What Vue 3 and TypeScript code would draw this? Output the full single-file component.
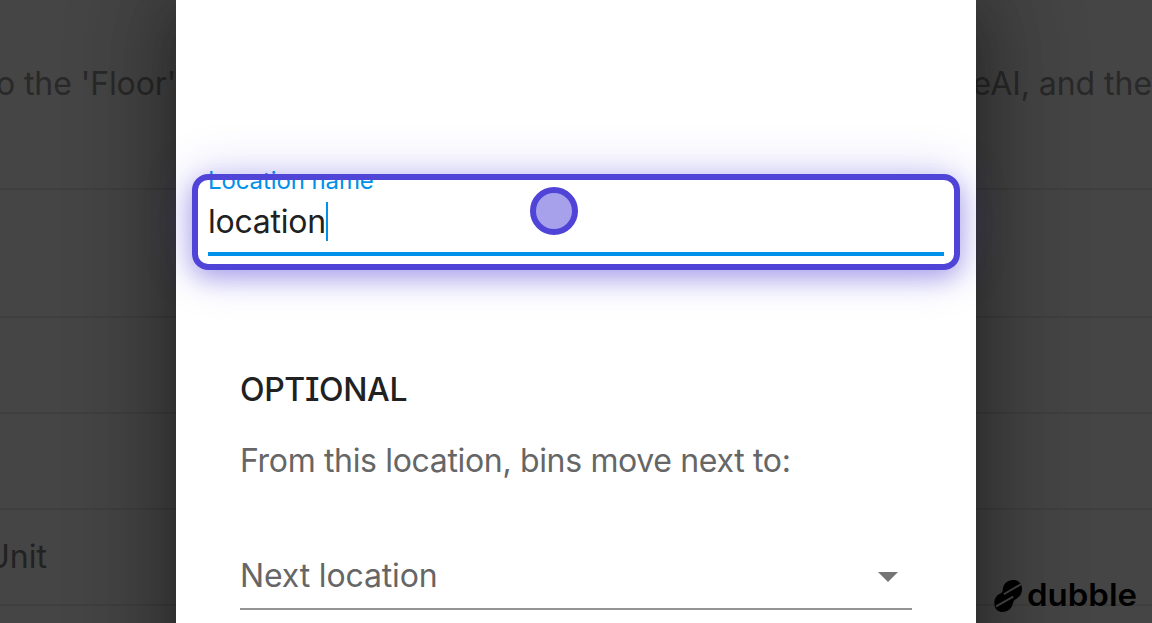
<script setup lang="ts">
const rowHeights: number[] = [190, 128, 96, 96, 96, 96]
</script>

<template>
  <main class="screen">
    <div class="backdrop-page">
      <div v-for="(h, i) in rowHeights" :key="i" class="row" :style="{ height: h + 'px' }">
        <template v-if="i === 0">
          <span class="left-copy">o the 'Floor'</span>
          <span class="right-copy">eAI, and the</span>
        </template>
        <span v-if="i === 4" class="unit">Unit</span>
      </div>
    </div>
    <section class="dialog">
      <div class="field">
        <label class="field-label">Location name</label>
        <div class="field-value"><span>location</span><i class="caret"></i></div>
      </div>
      <div class="optional">
        <h2>OPTIONAL</h2>
        <p>From this location, bins move next to:</p>
        <div class="select">
          <span>Next location</span>
          <svg width="20" height="10" viewBox="0 0 20 10"><path d="M0 0H20L10 10Z" fill="#757575" /></svg>
        </div>
      </div>
    </section>
    <div class="highlight"></div>
    <div class="pointer"></div>
    <svg class="brand" width="160" height="44" viewBox="0 0 160 44">
      <g transform="translate(9.3 9)">
        <path d="M9 7C10 3 14 0 19 0C24.5 0 27.7 4 27.7 9C27.7 15 24 18 20 20C19 21 19 23 18 25C17 29 13 32 8 32C3 32 0 28 0 23C0 17 4 14 7 13C9 12 8 9 9 7Z" />
        <path class="cut" d="M9.5 14.3L26.6 4.2M1.8 26.4L19 16.7" />
      </g>
      <text x="42" y="34.5" textLength="110" lengthAdjust="spacingAndGlyphs">dubble</text>
    </svg>
  </main>
</template>

<style>
body { margin: 0; overflow: hidden; }
</style>
<style scoped>
.screen {
  position: relative;
  width: 1152px;
  height: 623px;
  overflow: hidden;
  background: #454545;
  font-family: Inter, "Liberation Sans", sans-serif;
  font-size: 32px;
  line-height: 40px;
}
.backdrop-page { position: absolute; inset: 0; color: #292929; }
.row { box-sizing: border-box; border-bottom: 2px solid #3f3f3f; display: flex; justify-content: space-between; white-space: nowrap; }
.left-copy { margin: 64px 0 0 -4px; letter-spacing: -0.1px; }
.right-copy { margin: 64px 0 0; letter-spacing: -0.05px; }
.unit { margin: 27px 0 0 -14px; letter-spacing: 0; color: #222; }
.dialog {
  position: relative;
  box-sizing: border-box;
  width: 800px;
  height: 900px;
  margin: 0 auto;
  padding: 168px 32px 0;
  background: #fff;
  box-shadow: 0 22px 30px -14px rgba(0, 0, 0, 0.2), 0 0 76px 6px rgba(0, 0, 0, 0.25), 0 0 92px 16px rgba(0, 0, 0, 0.22);
}
.field { box-sizing: border-box; height: 88px; border-bottom: 4px solid #0091ea; }
.field-label { display: block; height: 26px; line-height: 26px; font-size: 24px; letter-spacing: -0.1px; color: #0091ea; }
.field-value { display: flex; align-items: center; height: 54px; color: #212121; letter-spacing: -0.25px; }
.field-value span { padding-top: 2px; }
.caret { width: 2px; height: 39px; background: #0091ea; }
.optional { padding: 0 32px; }
h2 { margin: 114px 0 0; font-size: 32px; line-height: 40px; font-weight: 500; color: #212121; letter-spacing: -0.35px; font-feature-settings: "cv08"; }
p { margin: 31px 0 0; color: #666; letter-spacing: -0.34px; }
.select { display: flex; justify-content: space-between; align-items: center; box-sizing: border-box; height: 68px; margin-top: 61px; padding: 2px 14px 0 0; border-bottom: 2px solid #949494; color: #666; letter-spacing: -0.15px; }
.select svg { margin-top: 2px; }
.highlight {
  position: absolute;
  left: 192px;
  top: 174px;
  box-sizing: border-box;
  width: 768px;
  height: 96px;
  border: 6px solid #4f43d8;
  border-radius: 16px;
  box-shadow: 0 8px 24px rgba(79, 67, 216, 0.4), 0 0 48px rgba(79, 67, 216, 0.25);
}
.pointer { position: absolute; left: 530px; top: 187px; box-sizing: border-box; width: 48px; height: 48px; border: 6px solid #4f43d8; border-radius: 50%; background: #a7a1eb; }
.brand { position: absolute; left: 985px; top: 571px; }
.brand text { font: 600 31px Inter, sans-serif; }
.cut { fill: none; stroke: #3d3d3d; stroke-width: 1.9; }
</style>
